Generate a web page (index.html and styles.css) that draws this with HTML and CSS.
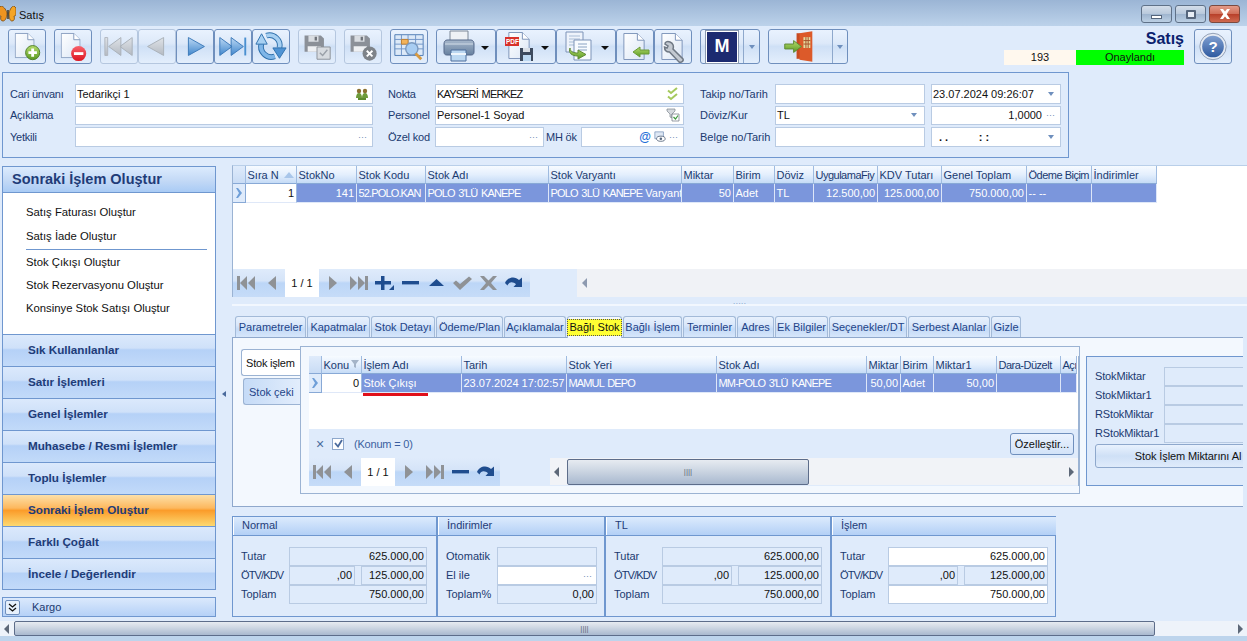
FILE: index.html
```html
<!DOCTYPE html>
<html lang="tr">
<head>
<meta charset="utf-8">
<title>Satış</title>
<link rel="stylesheet" href="styles.css">
</head>
<body>
<svg class="defs" aria-hidden="true">
  <defs>
    <linearGradient id="gBlue" x1="0" y1="0" x2="0" y2="1"><stop offset="0" stop-color="#bcd8f4"/><stop offset="1" stop-color="#3f86cc"/></linearGradient>
    <linearGradient id="gGray" x1="0" y1="0" x2="0" y2="1"><stop offset="0" stop-color="#dfe3e8"/><stop offset="1" stop-color="#b4bac2"/></linearGradient>
    <linearGradient id="gGreen" x1="0" y1="0" x2="0" y2="1"><stop offset="0" stop-color="#b6dc6e"/><stop offset="1" stop-color="#5a9a22"/></linearGradient>
    <linearGradient id="gRed" x1="0" y1="0" x2="0" y2="1"><stop offset="0" stop-color="#f8616a"/><stop offset="1" stop-color="#dc1420"/></linearGradient>
    <linearGradient id="gPage" x1="0" y1="0" x2="1" y2="1"><stop offset="0" stop-color="#ffffff"/><stop offset="1" stop-color="#dbe6f5"/></linearGradient>
    <linearGradient id="gHelp" x1="0" y1="0" x2="0" y2="1"><stop offset="0" stop-color="#7f9fd0"/><stop offset="1" stop-color="#2f5aa0"/></linearGradient>
    <linearGradient id="gPrinter" x1="0" y1="0" x2="0" y2="1"><stop offset="0" stop-color="#a7b8cc"/><stop offset="1" stop-color="#66809f"/></linearGradient>
    <symbol id="nFirst" viewBox="0 0 19 14"><path d="M0 0h3v14H0zM10 0v14L3 7zM18 0v14L11 7z"/></symbol>
    <symbol id="nPrev" viewBox="0 0 19 14"><path d="M13 0v14L5 7z"/></symbol>
    <symbol id="nNext" viewBox="0 0 19 14"><path d="M6 0v14l8-7z"/></symbol>
    <symbol id="nLast" viewBox="0 0 19 14"><path d="M1 0v14l7-7zM9 0v14l7-7zM16 0h3v14h-3z"/></symbol>
    <symbol id="nPlus" viewBox="0 0 19 14"><path d="M6 0h3.500v5H16v3.500H9.500V14H6V8.500H0V5h6z"/><path d="M19 9v5h-5z"/></symbol>
    <symbol id="nMinus" viewBox="0 0 19 14"><path d="M1 5h17v3.400H1z"/></symbol>
    <symbol id="nUp" viewBox="0 0 19 14"><path d="M2 10l7.500-7 7.500 7z"/></symbol>
    <symbol id="nCheck" viewBox="0 0 19 14"><path d="M0 7l3-2.500 4 3.500 9-7.500 3 2.500L7 14z"/></symbol>
    <symbol id="nX" viewBox="0 0 19 14"><path d="M1 0h4l4.500 4.500L14 0h4l-6 7 6 7h-4L9.500 9.500 5 14H1l6-7z"/></symbol>
    <symbol id="nRedo" viewBox="0 0 19 14"><path d="M0 7C2 1 10-.5 14 4l3-2.500V11h-8.500L11 8.300C8 5.500 4 5.500 2.500 9.500z"/></symbol>
    <symbol id="floppy" viewBox="0 0 28 28"><path d="M1 1h21l4 4v17H1z" fill="#8b9098"/><path d="M6 1h13v8H6z" fill="#d9dde2"/><path d="M14 2.500h3v5h-3z" fill="#6e737a"/><path d="M5 15h17v7H5z" fill="#eef0f3"/></symbol>
    <symbol id="page" viewBox="0 0 22 28"><path d="M.5.500h14l7 7v20H.5z" fill="url(#gPage)" stroke="#7c93b8"/><path d="M14.500.500v7h7" fill="#fff" stroke="#7c93b8"/></symbol>
  </defs>
</svg>

<header class="titlebar">
  <svg class="butterfly" viewBox="0 0 16 16"><path d="M7 7C6 3 3 0 1 0L-1 2v5c0 3 1 3 2 3-1 3 0 5 2 5s4-3 4-8z" fill="#ee9420" stroke="#7a4a10" stroke-width=".8"/><path d="M9 7c1-4 3-7 5-7l2 2v5c0 3-1 3-2 3 1 3 0 5-2 5s-3-3-3-8z" fill="#f4a526" stroke="#7a4a10" stroke-width=".8"/><path d="M7.300 4h1.400v9H7.300z" fill="#3a2a10"/></svg>
  <span class="title-text">Satış</span>
  <div class="wincontrols">
    <button class="winbtn"><span class="g-min"></span></button>
    <button class="winbtn"><span class="g-max"></span></button>
    <button class="winbtn close"><svg viewBox="0 0 12 10" width="12" height="10"><path d="M1 0h3l2 2.500L8 0h3L7.700 5 11 10H8L6 7.500 4 10H1l3.300-5z" fill="#fff"/></svg></button>
  </div>
</header>

<section class="toolbar">
  <button class="tb"><svg viewBox="0 0 38 35"><use href="#page" x="6" y="3" width="21" height="27"/><circle cx="25" cy="24" r="7.500" fill="url(#gGreen)" stroke="#4d7d28"/><path d="M23.500 19.500h3v3h3v3h-3v3h-3v-3h-3v-3h3z" fill="#fff"/></svg></button>
  <button class="tb"><svg viewBox="0 0 38 35"><use href="#page" x="6" y="3" width="21" height="27"/><circle cx="25" cy="25" r="8" fill="url(#gRed)"/><path d="M20 23.500h10v3H20z" fill="#fff"/></svg></button>
  <button class="tb dis gap0"><svg viewBox="0 0 38 35"><path d="M4 8h3v19H4z" fill="url(#gGray)" stroke="#b0b6be"/><path d="M21 8v19L8 17.500zM33 8v19L20 17.500z" fill="url(#gGray)" stroke="#a9b0b8"/></svg></button>
  <button class="tb dis gap0"><svg viewBox="0 0 38 35"><path d="M26 8v19L9 17.500z" fill="url(#gGray)" stroke="#a9b0b8"/></svg></button>
  <button class="tb gap0"><svg viewBox="0 0 38 35"><path d="M12 8v19l17-9.500z" fill="url(#gBlue)" stroke="#3a78b8"/></svg></button>
  <button class="tb gap0"><svg viewBox="0 0 38 35"><path d="M5 8v19l13-9.500zM17 8v19l13-9.500z" fill="url(#gBlue)" stroke="#3a78b8"/><path d="M31 8h2v19h-2z" fill="#4a90d0"/></svg></button>
  <button class="tb gap0"><svg viewBox="0 0 38 35"><g fill="none"><path d="M9 14A11 11 0 0 0 23 28" stroke="#2f70ac" stroke-width="6"/><path d="M9 14A11 11 0 0 0 23 28" stroke="#7fb6e8" stroke-width="4"/><path d="M28 19A11 11 0 0 0 14 6" stroke="#2f70ac" stroke-width="6"/><path d="M28 19A11 11 0 0 0 14 6" stroke="#a7d0f2" stroke-width="4"/></g><path d="M3 15L9 4l6 11z" fill="#a7d0f2" stroke="#2f70ac"/><path d="M21 19h14l-7 11z" fill="#4f93d4" stroke="#2f70ac"/></svg></button>
  <button class="tb dis sp"><svg viewBox="0 0 38 35"><use href="#floppy" x="5" y="5" width="23" height="23"/><path d="M19 18h14v13H19z" fill="#d7dbe0" stroke="#8b9098"/><path d="M22 24l3 3 5-6" fill="none" stroke="#9aa0a8" stroke-width="1.500"/></svg></button>
  <button class="tb dis"><svg viewBox="0 0 38 35"><use href="#floppy" x="5" y="5" width="23" height="23"/><circle cx="26" cy="25" r="7.500" fill="#7e8389"/><path d="M23 22l6 6M29 22l-6 6" stroke="#fff" stroke-width="2"/></svg></button>
  <button class="tb"><svg viewBox="0 0 38 35"><path d="M4 5h30v22H4z" fill="#dce9f8" stroke="#4f7bb5"/><path d="M4 10h30M4 15h30M4 20h30M11 5v22M18 5v22M26 5v22" stroke="#6e95c8" fill="none"/><path d="M11 10h7v5h-7z" fill="#f3b35a" stroke="#c08030"/><circle cx="22" cy="20" r="6.500" fill="#a8cdf2" stroke="#7a99bf" stroke-width="1.500"/><path d="M26 25l6 6" stroke="#d89a40" stroke-width="3"/></svg></button>

  <div class="split">
    <button class="tb drop"><svg class="ic" viewBox="0 0 36 33"><path d="M7 1h18v11H7z" fill="#eef1f5" stroke="#7d8897"/><path d="M4 10h24c2 0 3 2 3 4v8c0 2-1 3-3 3H4c-2 0-3-1-3-3v-8c0-2 1-4 3-4z" fill="url(#gPrinter)" stroke="#55688a"/><path d="M2 14h28" stroke="#d3dde8"/><path d="M8 20h15v11H8z" fill="#bcd8f2" stroke="#4f6f9c"/><path d="M8 24h15" stroke="#eef5fc" stroke-width="2"/></svg><span class="caret"></span></button>
    <button class="tb drop"><svg class="ic" viewBox="0 0 36 33"><use href="#page" x="5" y="2" width="22" height="27"/><path d="M2 7h14v9H2z" fill="#d8312a"/><text x="3" y="14.200" class="pdf">PDF</text><path d="M17 18h13v13H17z" fill="#3d4a5e"/><path d="M20 18h7v4h-7z" fill="#d8dee6"/><path d="M20 25h8v6h-8z" fill="#bcd8f2"/></svg><span class="caret"></span></button>
    <button class="tb drop"><svg class="ic" viewBox="0 0 36 33"><path d="M3 2h17v20H3z" fill="#eef3fb" stroke="#7c93b8"/><path d="M6 6h11M6 9h11M6 12h11M6 15h11" stroke="#a9bdd6"/><path d="M11 10h17v20H11z" fill="#f8fbff" stroke="#7c93b8"/><path d="M15 14h9M15 17h9M15 20h9" stroke="#8aa2c2"/><path d="M7 18c0 4 4 5 8 5v-3l8 4.500-8 4.500v-3c-6 0-10-3-8-8z" fill="url(#gGreen)" stroke="#5f8a36"/></svg><span class="caret"></span></button>
    <button class="tb"><svg viewBox="0 0 36 33"><use href="#page" x="6" y="3" width="22" height="27"/><path d="M16 22l7-5v3h9v4h-9v3z" fill="url(#gGreen)" stroke="#6a9a38"/></svg></button>
    <button class="tb last"><svg viewBox="0 0 36 33"><use href="#page" x="6" y="3" width="22" height="27"/><path d="M15 12c-3-1-5 0-5 2l3 2-1 2-2.500-1c0 3 2 5 5 5L24 32c2 1 5-1 4-3L18 19c1-3 0-6-3-7z" fill="#c3c9d1" stroke="#6f7884" stroke-width="1.500"/></svg></button>
  </div>
  <div class="tb-split">
    <button class="tb-main"><span class="mlogo">M</span></button>
    <button class="tb-arrow"><span class="caret blue"></span></button>
  </div>
  <div class="tb-split door">
    <button class="tb-main"><svg viewBox="0 0 64 33" width="64" height="33"><path d="M28 3h4v26h-4z" fill="#c84a22"/><path d="M31 3l13-2v31l-13-2z" fill="#dc5a2a"/><path d="M35 7h7v11h-7z" fill="#e9dca0"/><path d="M35 10.500h7M35 14h7M37.500 7v11M39.800 7v11" stroke="#a6532c"/><path d="M16 14h9v-3.500l8 6-8 6V19h-9z" fill="url(#gGreen)" stroke="#5f8a36"/></svg></button>
    <button class="tb-arrow"><span class="caret blue"></span></button>
  </div>
  <div class="status">
    <div class="status-title">Satış</div>
    <div class="status-row"><span class="st-no">193</span><span class="st-ok">Onaylandı</span></div>
  </div>
  <button class="tb help"><svg viewBox="0 0 38 35"><circle cx="19" cy="17.500" r="14" fill="#e6ebf3" stroke="#8d9cb4"/><circle cx="19" cy="17.500" r="11.500" fill="url(#gHelp)"/><text x="19" y="23" class="q">?</text></svg></button>
</section>

<section class="formbox">
  <div class="fcol c1">
    <div class="frow"><label>Cari ünvanı</label><div class="inp"><span>Tedarikçi 1</span><svg class="mi" viewBox="0 0 14 14"><circle cx="4" cy="4" r="2.200" fill="#8a7030"/><circle cx="10" cy="4" r="2.200" fill="#8a7030"/><path d="M1 11c0-3 1-5 3-5s3 2 3 5zM7 11c0-3 1-5 3-5s3 2 3 5z" fill="#6e9a3a"/><path d="M3 11h8v2H3z" fill="#5c8a2e"/></svg></div></div>
    <div class="frow"><label>Açıklama</label><div class="inp"></div></div>
    <div class="frow"><label>Yetkili</label><div class="inp"><i></i><b class="dots">···</b></div></div>
  </div>
  <div class="fcol c2">
    <div class="frow"><label>Nokta</label><div class="inp"><span class="caps">KAYSERİ MERKEZ</span><svg class="mi" viewBox="0 0 14 14"><path d="M2 3.500l3 2.500 6-5M2 9.500l3 2.500 6-5" fill="none" stroke="#a5c95c" stroke-width="2"/></svg></div></div>
    <div class="frow"><label>Personel</label><div class="inp"><span>Personel-1 Soyad</span><svg class="mi" viewBox="0 0 14 14"><path d="M1 1h8v2L6 6v4L4 9V6L1 3z" fill="#d5d9de" stroke="#7d858e" stroke-width=".7"/><path d="M6 6h7v7H6z" fill="#fff" stroke="#6a7280" stroke-width=".7"/><path d="M7.500 9l2 2 2.500-3.500" fill="none" stroke="#3d9a3d" stroke-width="1.200"/></svg></div></div>
    <div class="frow"><label>Özel kod</label><div class="inp ozel"><i></i><b class="dots">···</b></div><label class="mh">MH ök</label><div class="inp mhv"><i></i><span class="at">@</span><svg class="mi sm" viewBox="0 0 14 14"><path d="M1 1h10v8H1z" fill="#dfe8f4" stroke="#6f8db5" stroke-width=".8"/><ellipse cx="8" cy="9" rx="5" ry="3" fill="#fff" stroke="#56667c"/><circle cx="8" cy="9" r="1.500" fill="#56667c"/></svg><b class="dots">···</b></div></div>
  </div>
  <div class="fcol c3">
    <div class="frow"><label>Takip no/Tarih</label><div class="inp w150"></div><div class="inp w130"><span>23.07.2024 09:26:07</span><span class="caret blue"></span></div></div>
    <div class="frow"><label>Döviz/Kur</label><div class="inp w150"><span>TL</span><span class="caret blue"></span></div><div class="inp w130 right"><span>1,0000</span><b class="dots">···</b></div></div>
    <div class="frow"><label>Belge no/Tarih</label><div class="inp w150"></div><div class="inp w130"><span class="blankdate">. .&nbsp;&nbsp;&nbsp;&nbsp;&nbsp;&nbsp;&nbsp;&nbsp;&nbsp;&nbsp;: :</span><span class="caret blue"></span></div></div>
  </div>
</section>

<main class="main">
  <aside class="sidebar">
    <div class="side-head">Sonraki İşlem Oluştur</div>
    <ul class="side-list">
      <li>Satış Faturası Oluştur</li>
      <li class="sep">Satış İade Oluştur</li>
      <li>Stok Çıkışı Oluştur</li>
      <li>Stok Rezervasyonu Oluştur</li>
      <li>Konsinye Stok Satışı Oluştur</li>
    </ul>
    <div class="acc">Sık Kullanılanlar</div>
    <div class="acc">Satır İşlemleri</div>
    <div class="acc">Genel İşlemler</div>
    <div class="acc">Muhasebe / Resmi İşlemler</div>
    <div class="acc">Toplu İşlemler</div>
    <div class="acc active">Sonraki İşlem Oluştur</div>
    <div class="acc">Farklı Çoğalt</div>
    <div class="acc lastacc">İncele / Değerlendir</div>
    <div class="kargo"><span class="chev"><svg viewBox="0 0 9 9" width="9" height="9"><path d="M1 1l3.500 3L8 1M1 5l3.500 3L8 5" fill="none" stroke="#111" stroke-width="1.300"/></svg></span><span>Kargo</span></div>
  </aside>
  <div class="gutter"><span class="gut-arrow"></span></div>
  <div class="content">
    <section class="topgrid">
      <div class="grid g-main">
        <div class="th ind"></div><div class="th sort">Sıra N<svg viewBox="0 0 10 6" width="10" height="6"><path d="M0 6l5-6 5 6z" fill="#a9c6ea"/></svg></div><div class="th">StokNo</div><div class="th">Stok Kodu</div><div class="th">Stok Adı</div><div class="th">Stok Varyantı</div><div class="th">Miktar</div><div class="th">Birim</div><div class="th">Döviz</div><div class="th"><span class="tight">UygulamaFiy</span></div><div class="th">KDV Tutarı</div><div class="th">Genel Toplam</div><div class="th"><span class="tight">Ödeme Biçim</span></div><div class="th">İndirimler</div>
        <div class="td ind"><svg viewBox="0 0 6 10" width="6" height="10"><path d="M0 0h2l4 5-4 5H0l3-5z" fill="#6f9fd8"/></svg></div><div class="td first num">1</div><div class="td num">141</div><div class="td"><span class="caps">52.POLO.KAN</span></div><div class="td"><span class="caps">POLO 3'LÜ KANEPE</span></div><div class="td"><span><span class="caps">POLO 3LÜ KANEPE</span> Varyant</span></div><div class="td num">50</div><div class="td">Adet</div><div class="td">TL</div><div class="td num">12.500,00</div><div class="td num">125.000,00</div><div class="td num">750.000,00</div><div class="td">-- --</div><div class="td"></div>
      </div>
      <div class="gridblank"></div>
      <div class="navrow">
        <nav class="nav">
          <span class="nb gray"><svg><use href="#nFirst"/></svg></span><span class="nb gray"><svg><use href="#nPrev"/></svg></span><span class="pager">1 / 1</span><span class="nb gray"><svg><use href="#nNext"/></svg></span><span class="nb gray"><svg><use href="#nLast"/></svg></span><span class="nb"><svg><use href="#nPlus"/></svg></span><span class="nb"><svg><use href="#nMinus"/></svg></span><span class="nb"><svg><use href="#nUp"/></svg></span><span class="nb gray"><svg><use href="#nCheck"/></svg></span><span class="nb gray"><svg><use href="#nX"/></svg></span><span class="nb"><svg><use href="#nRedo"/></svg></span>
        </nav>
        <div class="navtrack"><span class="arr-l"></span></div>
      </div>
    </section>
    <div class="splitter"><span>·····</span></div>
    <div class="tabs">
      <span class="tab">Parametreler</span><span class="tab">Kapatmalar</span><span class="tab">Stok Detayı</span><span class="tab">Ödeme/Plan</span><span class="tab">Açıklamalar</span><span class="tab sel"><em>Bağlı Stok</em></span><span class="tab">Bağlı İşlem</span><span class="tab">Terminler</span><span class="tab">Adres</span><span class="tab">Ek Bilgiler</span><span class="tab">Seçenekler/DT</span><span class="tab">Serbest Alanlar</span><span class="tab">Gizle</span>
    </div>
    <section class="tabpanel">
      <div class="vtabs">
        <span class="vtab sel">Stok işlem</span>
        <span class="vtab">Stok çeki</span>
      </div>
      <div class="innerbox">
        <div class="subgrid">
          <div class="grid g-sub">
            <div class="th ind"></div><div class="th sort">Konu<svg viewBox="0 0 8 9" width="8" height="9"><path d="M0 0h8L5 4v4L3 7V4z" fill="#a5b4c8"/></svg></div><div class="th">İşlem Adı</div><div class="th">Tarih</div><div class="th">Stok Yeri</div><div class="th">Stok Adı</div><div class="th">Miktar</div><div class="th">Birim</div><div class="th">Miktar1</div><div class="th"><span class="tight">Dara-Düzelt</span></div><div class="th"><span class="tight">Açı</span></div>
            <div class="td ind"><svg viewBox="0 0 6 10" width="6" height="10"><path d="M0 0h2l4 5-4 5H0l3-5z" fill="#6f9fd8"/></svg></div><div class="td first num">0</div><div class="td">Stok Çıkışı</div><div class="td">23.07.2024 17:02:57</div><div class="td"><span class="caps">MAMUL DEPO</span></div><div class="td"><span class="caps">MM-POLO 3'LÜ KANEPE</span></div><div class="td num">50,00</div><div class="td">Adet</div><div class="td num">50,00</div><div class="td"></div><div class="td"></div>
          </div>
          <div class="redline"></div>
          <div class="subblank"></div>
          <div class="filter">
            <span class="fx">×</span><span class="chk"><svg viewBox="0 0 9 9" width="9" height="9"><path d="M1 4l3 3.500L8 1" fill="none" stroke="#4a6a9c" stroke-width="1.800"/></svg></span><span class="fexpr">(Konum = 0)</span>
            <button class="customize">Özelleştir...</button>
          </div>
          <div class="subnav">
            <nav class="nav small">
              <span class="nb gray"><svg><use href="#nFirst"/></svg></span><span class="nb gray"><svg><use href="#nPrev"/></svg></span><span class="pager">1 / 1</span><span class="nb gray"><svg><use href="#nNext"/></svg></span><span class="nb gray"><svg><use href="#nLast"/></svg></span><span class="nb"><svg><use href="#nMinus"/></svg></span><span class="nb"><svg><use href="#nRedo"/></svg></span>
            </nav>
            <div class="subscroll"><span class="arr-l dark"></span><span class="thumb"><span class="grip">||||</span></span><span class="arr-r"></span></div>
          </div>
        </div>
      </div>
      <aside class="stockpanel">
        <div class="sp-row"><label>StokMiktar</label><div class="sp-val"></div></div>
        <div class="sp-row"><label>StokMiktar1</label><div class="sp-val"></div></div>
        <div class="sp-row"><label>RStokMiktar</label><div class="sp-val"></div></div>
        <div class="sp-row"><label>RStokMiktar1</label><div class="sp-val"></div></div>
        <button class="sp-btn">Stok İşlem Miktarını Al</button>
      </aside>
    </section>
    <section class="totals">
      <div class="group g1">
        <div class="ghead">Normal</div>
        <div class="gbody">
          <div class="trow"><label>Tutar</label><div class="val">625.000,00</div></div>
          <div class="trow"><label class="caps">ÖTV/KDV</label><div class="val v1">,00</div><div class="val v2">125.000,00</div></div>
          <div class="trow"><label>Toplam</label><div class="val">750.000,00</div></div>
        </div>
      </div>
      <div class="group g2">
        <div class="ghead">İndirimler</div>
        <div class="gbody">
          <div class="trow"><label>Otomatik</label><div class="val"></div></div>
          <div class="trow"><label>El ile</label><div class="val white"><b class="dots">···</b></div></div>
          <div class="trow"><label>Toplam%</label><div class="val">0,00</div></div>
        </div>
      </div>
      <div class="group g3">
        <div class="ghead">TL</div>
        <div class="gbody">
          <div class="trow"><label>Tutar</label><div class="val">625.000,00</div></div>
          <div class="trow"><label class="caps">ÖTV/KDV</label><div class="val v1">,00</div><div class="val v2">125.000,00</div></div>
          <div class="trow"><label>Toplam</label><div class="val">750.000,00</div></div>
        </div>
      </div>
      <div class="group g4">
        <div class="ghead">İşlem</div>
        <div class="gbody">
          <div class="trow"><label>Tutar</label><div class="val white">625.000,00</div></div>
          <div class="trow"><label class="caps">ÖTV/KDV</label><div class="val v1">,00</div><div class="val v2">125.000,00</div></div>
          <div class="trow"><label>Toplam</label><div class="val white">750.000,00</div></div>
        </div>
      </div>
    </section>
  </div>
</main>
<div class="hscroll"><span class="arr-l dark"></span><span class="thumb"><span class="grip">||||</span></span><span class="arr-r"></span></div>
<div class="footband"></div>
</body>
</html>
```

FILE: styles.css
```css
* { box-sizing: border-box; }
html, body { margin: 0; padding: 0; }
body {
  width: 1247px; height: 641px; overflow: hidden;
  display: flex; flex-direction: column;
  background: #dfebfb;
  font: 11px "Liberation Sans", Arial, sans-serif;
  color: #1b3a70;
}
button { font: inherit; color: inherit; padding: 0; margin: 0; cursor: default; }
.defs { width: 0; height: 0; flex: none; display: block; }
svg { display: block; }
.caps { letter-spacing: -.85px; word-spacing: 1.500px; }
.tight { letter-spacing: -.5px; white-space: nowrap; }

/* title bar */
.titlebar {
  height: 26px; flex: none;
  display: flex; align-items: center;
  background: linear-gradient(#9bb5d5, #bcd2ea);
  color: #111; padding-right: 7px;
}
.butterfly { width: 16px; height: 16px; margin: 2px 3px 0 0; }
.title-text { margin-top: 3px; }
.wincontrols { margin-left: auto; display: flex; gap: 3px; margin-top: 2px; }
.winbtn {
  width: 31px; height: 18px; border: 1px solid #5f7188; border-radius: 3px;
  background: linear-gradient(#d4deea 0, #b9c9dc 48%, #9fb5cf 52%, #bcd0e4 100%);
  display: flex; align-items: center; justify-content: center;
}
.winbtn.close { background: linear-gradient(#e49a88 0, #d0705a 48%, #b8402a 52%, #cf6a50 100%); border-color: #7a4a40; }
.g-min { display: block; width: 11px; height: 4px; background: #fff; border: 1px solid #56667c; margin-top: 5px; }
.g-max { display: block; width: 10px; height: 9px; background: #e8eef6; border: 2px solid #56667c; border-radius: 1px; }

/* toolbar */
.toolbar {
  height: 46px; flex: none;
  display: flex; align-items: flex-start;
  padding: 3px 0 0 8px;
}
.tb {
  width: 38px; height: 35px; flex: none;
  border: 1px solid #6f8fbd; border-radius: 3px;
  background: linear-gradient(#e9f2fe 0, #dde9f9 40%, #cfe0f6 50%, #e3eefc 100%);
  margin-right: 8px; display: flex; align-items: center;
}
.tb > svg { width: 36px; height: 33px; }
.tb.gap0 { margin-right: 0; }
.tb.dis { border-color: #b5c7df; }
.tb.sp { margin-left: 8px; }
.split { display: flex; margin-right: 8px; }
.split .tb { margin-right: 0; }
.tb.drop { width: 60px; }
.tb .ic { width: 36px; height: 33px; flex: none; margin-left: 6px; }
.caret {
  width: 0; height: 0; display: inline-block; flex: none;
  border-left: 4px solid transparent; border-right: 4px solid transparent; border-top: 4px solid #111;
}
.caret.blue { border-left-width: 3.500px; border-right-width: 3.500px; border-top-color: #6f8fbd; }
.tb.drop .caret { margin-left: 2px; margin-top: 2px; }
.tb-split {
  display: flex; height: 35px; flex: none;
  border: 1px solid #6f8fbd; border-radius: 3px;
  background: linear-gradient(#e9f2fe 0, #dde9f9 40%, #cfe0f6 50%, #e3eefc 100%);
  width: 60px; margin-right: 8px;
}
.tb-split.door { width: 80px; margin-right: 0; }
.tb-main { border: 0; background: none; width: 42px; display: flex; align-items: center; justify-content: center; }
.door .tb-main { width: 63px; }
.tb-arrow { border: 0; border-left: 1px solid #8ea8cc; background: none; flex: 1; display: flex; align-items: center; justify-content: center; }
.mlogo {
  width: 30px; height: 30px; background: #1c2a70; box-shadow: 0 0 0 1px #fff, 0 0 0 2px #8a99b0;
  color: #fff; font: bold 18px "Liberation Sans", Arial, sans-serif; display: flex; align-items: center; justify-content: center;
}
.pdf { font: bold 6.500px "Liberation Sans", Arial, sans-serif; fill: #fff; }
.q { font: bold 16px "Liberation Sans", Arial, sans-serif; fill: #fff; text-anchor: middle; }
.status { margin-left: auto; margin-right: 10px; width: 180px; }
.status-title { font: bold 16px "Liberation Sans", Arial, sans-serif; color: #0b1f6e; text-align: right; height: 21px; line-height: 20px; }
.status-row { display: flex; height: 15px; line-height: 15px; color: #111; text-align: center; }
.st-no { width: 72px; background: #fff8ee; }
.st-ok { width: 108px; background: #00ff00; }
.tb.help { margin-right: 15px; }

/* form */
.formbox {
  width: 1067px; height: 86px; flex: none; margin-left: 2px;
  border: 1px solid #6f97cf;
  padding: 11px 0 0 7px;
  display: flex;
}
.fcol { display: grid; grid-template-rows: 20px 19px 20px; row-gap: 2px; flex: none; }
.c1 { width: 378px; }
.c2 { width: 312px; }
.frow { display: flex; align-items: stretch; }
.frow > label, .trow > label, .sp-row > label { display: flex; align-items: center; padding-bottom: 1px; }
.c1 label { width: 65px; letter-spacing: -.25px; }
.c2 .frow > label { width: 47px; letter-spacing: -.2px; }
.c3 .frow > label { width: 75px; }
.inp {
  flex: 1; background: #fff; border: 1px solid #b9cbe3; color: #111;
  display: flex; align-items: center; justify-content: space-between; padding: 0 3px 1px 1px;
}
.inp i { flex: 1; }
.c1 .inp { flex: none; width: 298px; }
.c2 .inp { flex: none; width: 249px; }
.c2 .inp.ozel { width: 109px; }
.c2 .frow > label.mh { width: 37px; padding-left: 2px; }
.c2 .inp.mhv { width: 103px; gap: 3px; }
.w150 { flex: none; width: 150px; margin-right: 6px; }
.w130 { flex: none; width: 130px; padding-right: 6px; }
.w150 .caret { margin-right: 4px; }
.w130.right { justify-content: flex-end; gap: 4px; padding-right: 3px; }
.mi { width: 14px; height: 14px; flex: none; }
.mi.sm { width: 12px; height: 12px; }
.dots { font-weight: normal; color: #6d8bb5; font-size: 9px; margin-right: 2px; }
.at { color: #1f6fd8; font-weight: bold; font-size: 12px; }
.blankdate { padding-left: 6px; font-weight: bold; }

/* main */
.main { flex: 1; display: flex; min-height: 0; }
.sidebar { width: 214px; margin: 8px 0 0 2px; flex: none; }
.side-head {
  height: 27px; padding-left: 9px; border: 1px solid #6f97cf;
  background: linear-gradient(#dcebfd, #c3d9f6 55%, #a9cbf5);
  font: bold 14.500px/24px "Liberation Sans", Arial, sans-serif; color: #1f3c78;
}
.side-list {
  list-style: none; margin: 0; padding: 8px 8px 0 23px;
  height: 141px; background: #fff; border: solid #6f97cf; border-width: 0 1px;
  color: #111; font-size: 11.300px;
}
.side-list li { height: 23px; line-height: 23px; }
.side-list li:first-child { height: 24px; line-height: 23px; }
.side-list li.sep { height: 25px; line-height: 23px; margin-bottom: 1px; border-bottom: 1px solid #6f97cf; }
.acc {
  height: 32px; padding-left: 25px; line-height: 30px;
  border: 1px solid #6f97cf; border-bottom-width: 0;
  background: linear-gradient(#dbe9fc 0, #cfe1f9 42%, #b5d1f7 48%, #c2daf9 100%);
  font-weight: bold; font-size: 11.700px; color: #1f3c78;
}
.acc.active { background: linear-gradient(#fde0a8 0, #fdb85e 42%, #fb9c2a 50%, #fdd970 100%); }
.acc.lastacc { border-bottom-width: 1px; }
.kargo {
  height: 20px; margin-top: 7px; display: flex; align-items: center; gap: 12px; padding-left: 2px;
  border: 1px solid #6f97cf;
  background: linear-gradient(#dbe9fc, #b5d1f7);
}
.chev {
  width: 15px; height: 15px; border: 1px solid #6f8fbd; border-radius: 2px; background: #e6f0fc;
  display: flex; align-items: center; justify-content: center;
}
.gutter {
  width: 16px; flex: none; display: flex; align-items: center; justify-content: center;
  padding-top: 8px;
}
.gut-arrow { width: 0; height: 0; border: 3px solid transparent; border-right: 4px solid #4a6a9c; border-left: 0; }
.content { width: 1015px; flex: none; display: flex; flex-direction: column; padding-top: 7px; }

/* grids */
.topgrid { border-left: 1px solid #9bb3d3; height: 132px; background: #fff; border-top: 1px solid #b9cfe9; display: flex; flex-direction: column; }
.grid { display: grid; flex: none; grid-template-rows: 18px 19px; }
.g-main { grid-template-columns: 13px 51px 60px 69px 123px 133px 52px 41px 39px 64px 64px 85px 65px 65px; }
.g-sub { grid-template-columns: 13px 40px 100px 105px 150px 150px 34px 33px 63px 64px 16px; }
.th, .td { white-space: nowrap; overflow: hidden; padding: 0 1px 0 1.500px; display: flex; align-items: center; border-right: 1px solid #9fbbe0; }
.th {
  background: linear-gradient(#f7fbff, #e4effd 50%, #c5dbf6);
  color: #1b3a70; border-bottom: 1px solid #88a9d6;
}
.th.sort { justify-content: space-between; padding-right: 2px; }
.th.sort svg { flex: none; }
.td { background: #7b96dc; color: #fff; border-right-color: #dde6f8; border-bottom: 1px solid #dfe8f8; height: 19px; }
.td.num { justify-content: flex-end; padding-right: 2px; }
.td.ind { background: #dfebfb; justify-content: center; border-right-color: #88a9d6; border-bottom-color: #88a9d6; }
.td.first { background: #fff; color: #111; border-right-color: #9fbbe0; }
.th.ind { background: linear-gradient(#dfebfb, #c9dcf5); }
.gridblank { flex: 1; background: #fff; }
.navrow { height: 28px; flex: none; display: flex; background: #dfebfb; }
.nav {
  display: flex; width: 297px; height: 28px; flex: none;
  background: linear-gradient(#dfebfb 0, #d5e4f8 42%, #bcd6f7 50%, #c6dcf8 100%);
}
.nav.small { width: 191px; }
.nb { width: 26px; flex: none; display: flex; align-items: center; justify-content: center; color: #1f4d8f; fill: currentColor; }
.nb.gray { color: #8f9296; }
.nb svg { width: 19px; height: 14px; }
.pager { width: 34px; background: #fff; color: #111; display: flex; align-items: center; justify-content: center; }
.navtrack { margin-left: 47px; flex: 1; background: #f0f2f6; display: flex; align-items: center; padding-left: 5px; }
.arr-l { width: 0; height: 0; border: 5px solid transparent; border-right: 5px solid #8d9ab0; border-left: 0; flex: none; }
.arr-l.dark { border-right-color: #5d6878; }
.arr-r { width: 0; height: 0; border: 5px solid transparent; border-left: 5px solid #5d6878; border-right: 0; flex: none; }
.splitter { height: 10px; flex: none; display: flex; align-items: flex-end; justify-content: center; color: #6f8fbd; font-size: 8px; line-height: 7px; background: linear-gradient(#dfebfb 0 7px, #f2f7fe 7px 9px, #dfebfb 9px); }

/* tabs */
.tabs { display: flex; height: 21px; flex: none; margin-top: 9px; padding-left: 3px; gap: 1px; }
.tab {
  height: 21px; padding: 0 3px; display: flex; align-items: center; justify-content: center;
  border: 1px solid #a3bad8; border-bottom: 0; border-radius: 3px 3px 0 0;
  background: linear-gradient(#e8f1fd, #d9e7fa 40%, #c5dbf7 60%, #d6e6fb);
  color: #1f4488; white-space: nowrap;
}
.tab:nth-child(1) { width: 71px; } .tab:nth-child(2) { width: 63px; } .tab:nth-child(3) { width: 64px; }
.tab:nth-child(4) { width: 67px; } .tab:nth-child(5) { width: 62px; } .tab:nth-child(6) { width: 55px; }
.tab:nth-child(7) { width: 59px; } .tab:nth-child(8) { width: 53px; } .tab:nth-child(9) { width: 37px; }
.tab:nth-child(10) { width: 53px; } .tab:nth-child(11) { width: 78px; } .tab:nth-child(12) { width: 82px; } .tab:nth-child(13) { width: 30px; }
.tab.sel { background: #f4f8fe; height: 22px; position: relative; z-index: 1; padding: 0 2px; }
.tab.sel em { font-style: normal; background: #ffff33; border: 1px dotted #555; color: #111; padding: 1px; line-height: 13px; }
.tabpanel {
  width: 1011px; height: 170px; flex: none; display: flex; overflow: hidden;
  border: 1px solid #8fa8cc; border-right: 0;
  background: #f3f8fe; padding: 8px 0 0 8px;
}
.vtabs { width: 59px; flex: none; display: flex; flex-direction: column; padding-top: 3px; align-items: flex-end; }
.vtab {
  height: 27px; display: flex; align-items: center; padding-left: 5px;
  color: #1f4488; border: 1px solid #9bb3d3; border-right: 0; border-radius: 3px 0 0 3px;
  width: 57px; background: linear-gradient(90deg, #c5dbf7, #e2edfc);
  margin-top: 2px;
}
.vtab.sel { width: 59px; background: #fff; color: #111; margin-top: 0; padding-left: 4px; letter-spacing: -.2px; }
.innerbox { width: 780px; height: 148px; flex: none; border: 1px solid #9bb3d3; padding: 9px 0 0 8px; background: #f3f8fe; }
.subgrid { width: 770px; height: 130px; border: 1px solid #9bb3d3; border-width: 0 1px 1px 0; background: #fff; display: flex; flex-direction: column; }
.redline { height: 3px; width: 65px; background: #e0101a; margin-left: 54px; flex: none; }
.subblank { height: 33px; flex: none; }
.filter { height: 29px; flex: none; background: #dfebfb; display: flex; align-items: center; padding-left: 7px; color: #3b5fa0; }
.fx { font-size: 14px; width: 16px; color: #4a6a9c; }
.chk { width: 12px; height: 12px; border: 1px solid #8ea8cc; background: #fff; display: flex; align-items: center; justify-content: center; }
.fexpr { margin-left: 10px; letter-spacing: -.2px; }
.customize {
  margin-left: auto; margin-right: 4px; width: 64px; height: 22px; border: 1px solid #6f8fbd; border-radius: 3px;
  background: linear-gradient(#eaf2fe, #d3e3f8); color: #111;
}
.subnav { height: 28px; flex: none; display: flex; background: #dfebfb; }
.subscroll { margin-left: 50px; flex: 1; height: 27px; display: flex; align-items: center; background: #f1f3f7; padding: 0 4px; }
.subscroll .arr-l { margin-right: 8px; }
.thumb {
  height: 26px; width: 242px; flex: none; border: 1px solid #5d6d8a; border-radius: 2px;
  background: linear-gradient(#e7ebf1, #cfd8e4 40%, #a9b9cf 100%);
  display: flex; align-items: center; justify-content: center; color: #5d6878; font-size: 8px;
}
.subscroll .arr-r { margin-left: auto; }
.stockpanel { margin-left: 6px; margin-top: 10px; width: 190px; height: 130px; flex: none; border: 1px solid #6f97cf; background: #dfebfb; padding: 10px 0 0 8px; }
.sp-row { display: flex; height: 19px; }
.sp-row label { width: 69px; flex: none; letter-spacing: -.15px; }
.sp-val { flex: 1; background: #dfebfb; border: 1px solid #b9cbe3; }
.sp-btn { margin-top: 1px; width: 186px; height: 24px; border: 1px solid #8ea8cc; border-radius: 3px; background: linear-gradient(#e9f2fe, #cfe0f6 50%, #dfebfb); color: #111; letter-spacing: -.1px; }

/* totals */
.totals { display: flex; margin-top: 9px; width: 824px; height: 101px; flex: none; border: 1px solid #6f97cf; }
.group { flex: none; border-left: 2px solid #6f97cf; }
.group.g1 { width: 203px; border-left: 0; }
.group.g2 { width: 168px; }
.group.g3 { width: 226px; }
.group.g4 { width: 226px; }
.ghead { height: 19px; padding-left: 9px; line-height: 17px; border-bottom: 1px solid #6f97cf; background: linear-gradient(#dcebfd, #b3d0f6); color: #1f3c78; box-shadow: inset 1px 0 #fff; }
.gbody { padding: 11px 0 0 8px; display: flex; flex-direction: column; }
.trow { display: flex; height: 19px; }
.trow label { flex: none; }
.g1 label, .g3 label, .g4 label { width: 48px; }
.g2 label { width: 51px; }
.val { flex: none; text-align: right; background: #dfebfb; border: 1px solid #b9cbe3; color: #111; padding: 0 2px; line-height: 16px; }
.val.white { background: #fff; }
.g1 .val { width: 138px; }
.g2 .val { width: 100px; }
.g3 .val { width: 160px; }
.g4 .val { width: 160px; }
.g1 .val.v1 { width: 66px; margin-right: 6px; }
.g1 .val.v2 { width: 66px; }
.g3 .val.v1, .g4 .val.v1 { width: 70px; margin-right: 6px; }
.g3 .val.v2, .g4 .val.v2 { width: 84px; }

/* bottom */
.hscroll { height: 15px; flex: none; display: flex; align-items: center; background: #eef3fa; padding: 0 2px 0 4px; }
.hscroll .arr-l { margin-right: 5px; }
.hscroll .thumb { width: 1141px; height: 15px; }
.hscroll .arr-r { margin-left: auto; margin-right: 2px; }
.footband { height: 5px; flex: none; background: #bdd4ec; }
```
